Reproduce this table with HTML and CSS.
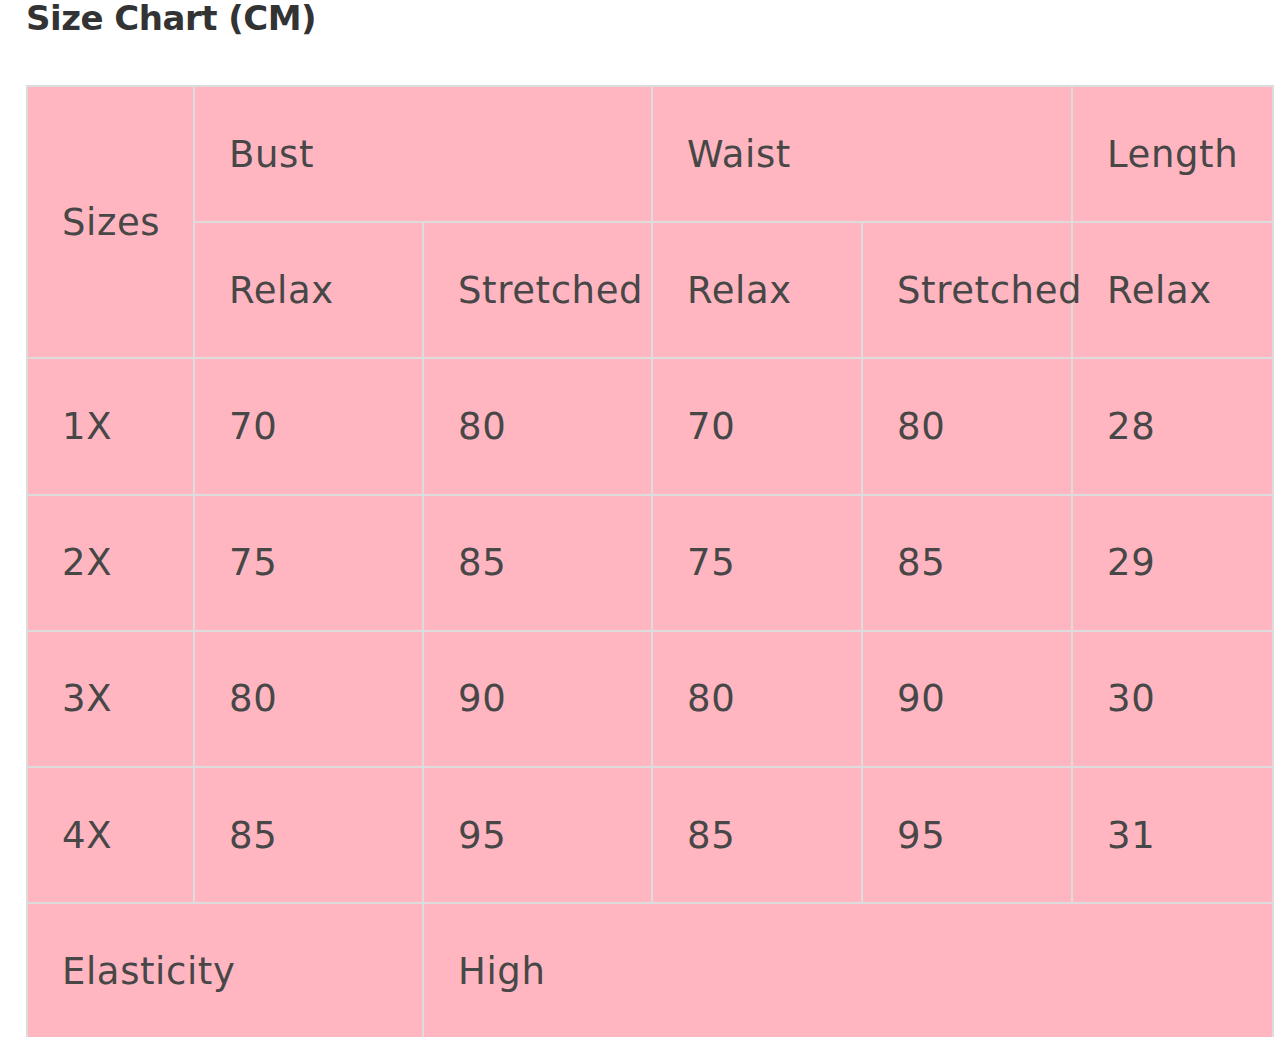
FILE: index.html
```html
<!DOCTYPE html>
<html>
<head>
<meta charset="utf-8">
<link rel="stylesheet" href="styles.css">
</head>
<body>
<div class="page">
  <h2 class="title">Size Chart (CM)</h2>
  <table class="chart">
    <colgroup>
      <col class="c1"><col class="c2"><col class="c3"><col class="c4"><col class="c5"><col class="c6">
    </colgroup>
    <tr><td rowspan="2">Sizes</td><td colspan="2">Bust</td><td colspan="2">Waist</td><td>Length</td></tr>
    <tr><td>Relax</td><td>Stretched</td><td>Relax</td><td>Stretched</td><td>Relax</td></tr>
    <tr><td>1X</td><td>70</td><td>80</td><td>70</td><td>80</td><td>28</td></tr>
    <tr><td>2X</td><td>75</td><td>85</td><td>75</td><td>85</td><td>29</td></tr>
    <tr><td>3X</td><td>80</td><td>90</td><td>80</td><td>90</td><td>30</td></tr>
    <tr><td>4X</td><td>85</td><td>95</td><td>85</td><td>95</td><td>31</td></tr>
    <tr><td colspan="2">Elasticity</td><td colspan="4">High</td></tr>
  </table>
</div>
</body>
</html>
```
FILE: styles.css
```css
html, body {
  margin: 0;
  padding: 0;
  background: #ffffff;
}
.page {
  padding-left: 26px;
  font-family: "DejaVu Sans", sans-serif;
  color: #444444;
}
.title {
  margin: -6px 0 0 0;
  font-size: 34px;
  line-height: 48px;
  font-weight: bold;
  color: #333333;
  height: 91px;
  letter-spacing: -0.5px;
}
.chart {
  border-collapse: collapse;
  table-layout: fixed;
  width: 1248px;
  background: #ffb6c1;
}
.c1 { width: 167px; }
.c2 { width: 229px; }
.c3 { width: 229px; }
.c4 { width: 210px; }
.c5 { width: 210px; }
.c6 { width: 201px; }
.chart td {
  border: 2px solid #dcdcdc;
  height: 136.2px;
  padding: 0 0 0 34px;
  box-sizing: border-box;
  font-size: 37px;
  letter-spacing: 0.6px;
  white-space: nowrap;
  overflow: visible;
  vertical-align: middle;
  color: #474747;
}
.chart tr:first-child td[rowspan] {
  height: auto;
}
```
